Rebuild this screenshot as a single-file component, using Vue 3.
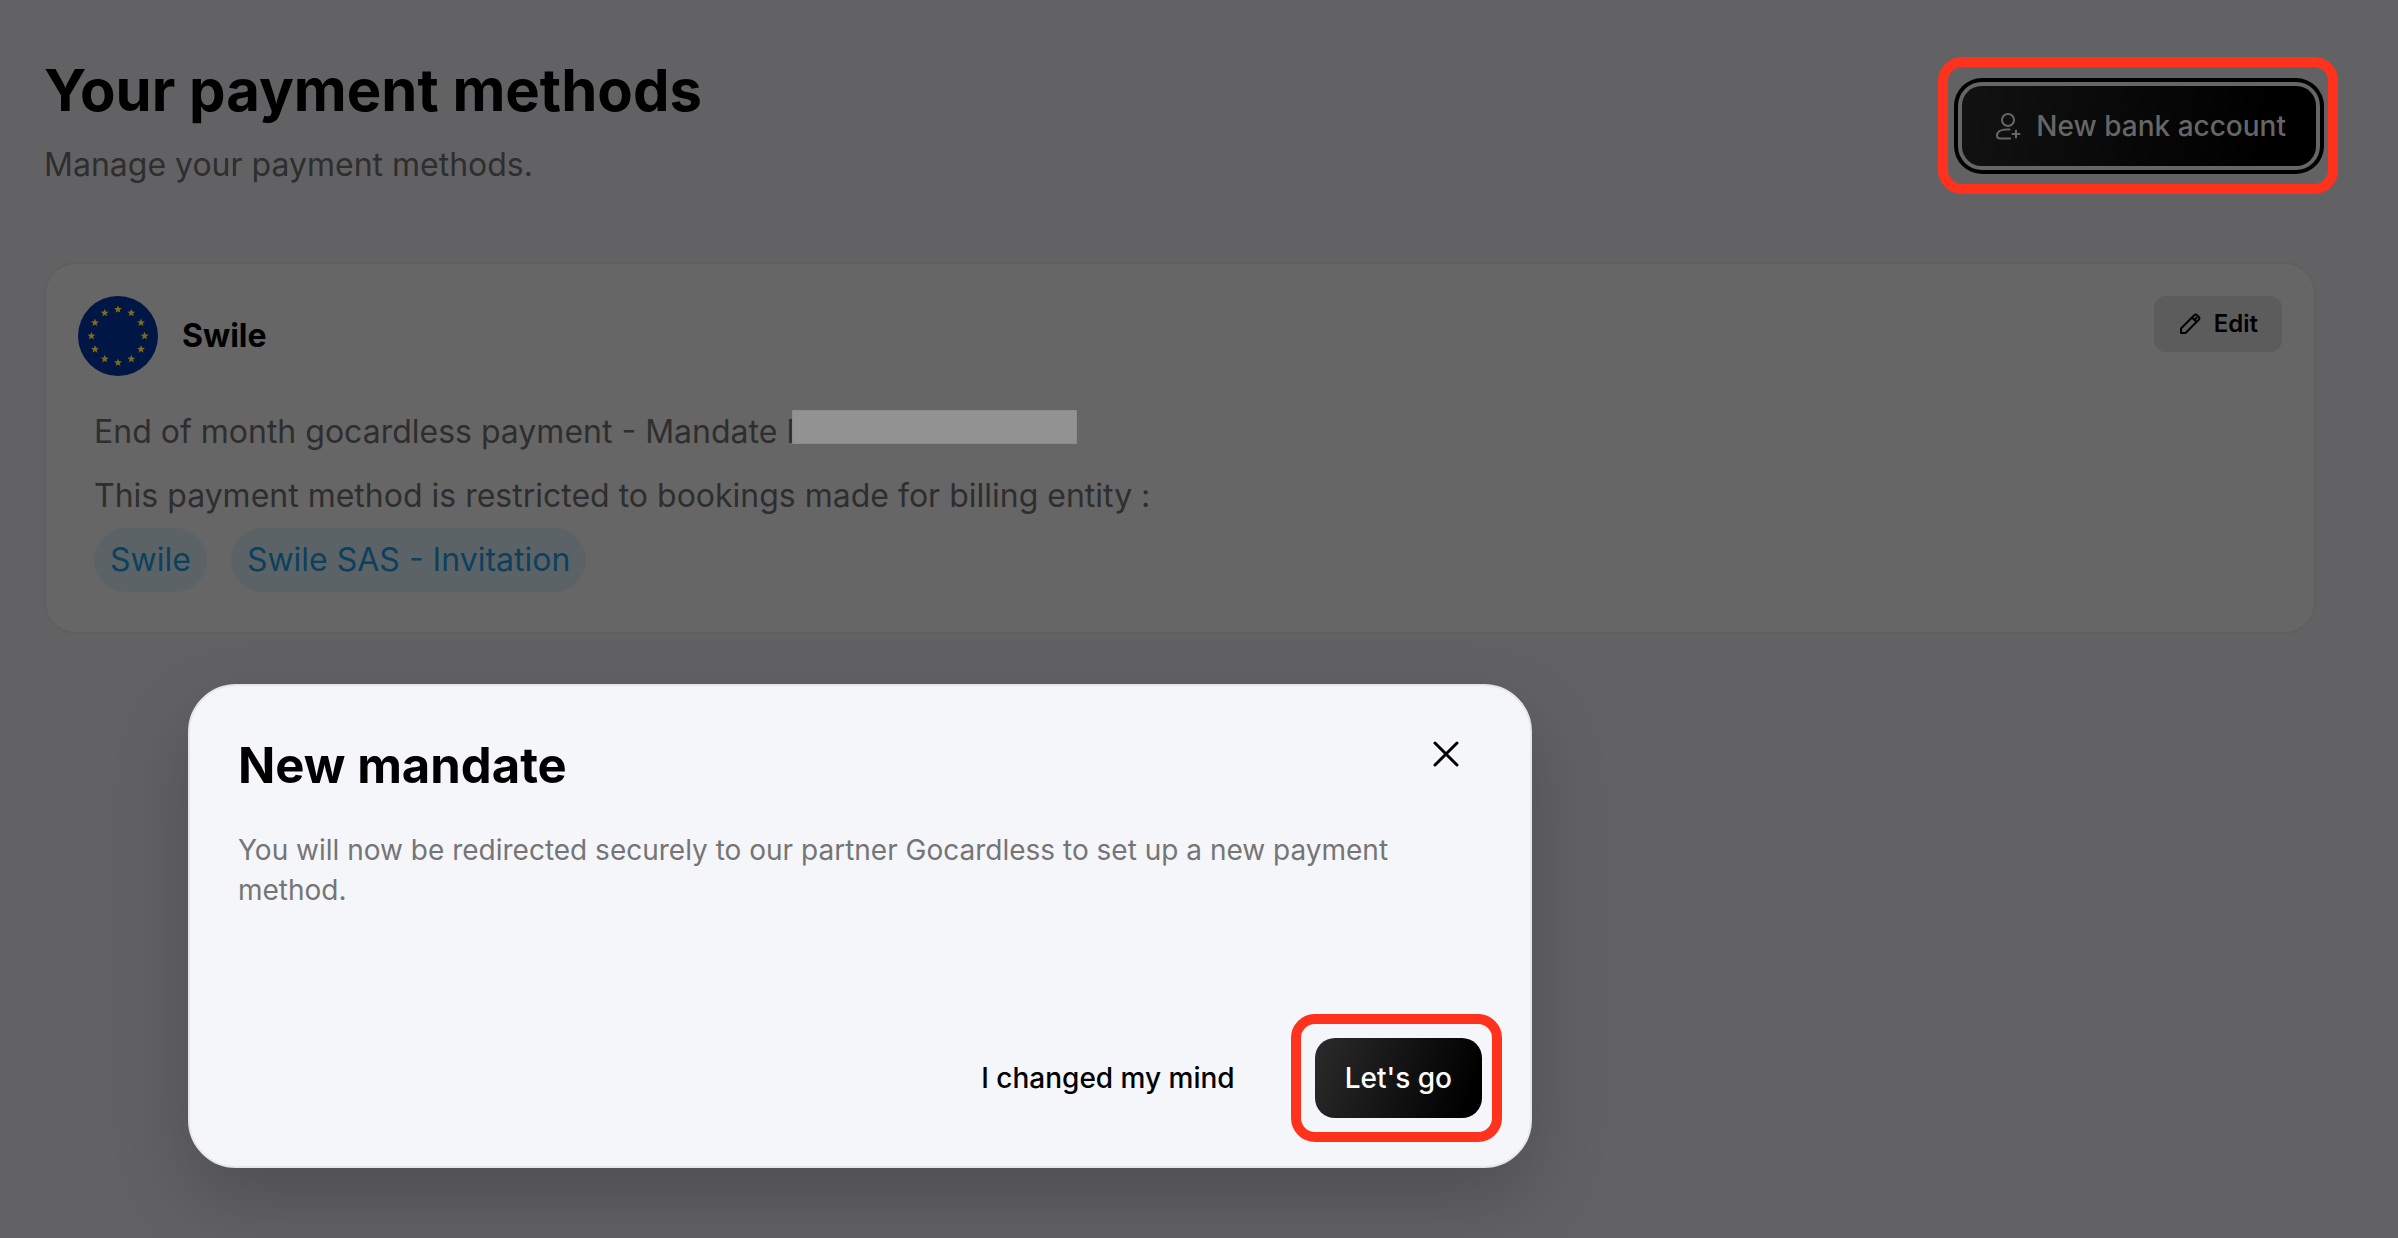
<template>
  <div class="page">
    <header class="page-header">
      <div>
        <h1 class="page-title">Your payment methods</h1>
        <p class="page-subtitle">Manage your payment methods.</p>
      </div>
      <div class="marked marked--header">
        <button type="button" class="btn btn--account" @click="dialogOpen = true">
          <svg class="btn-icon" viewBox="0 0 28 28" aria-hidden="true">
            <circle cx="14" cy="8" r="6" />
            <path d="M15.500 17.500h-3C6.500 17.500 3 20 3 23.500c0 2 1.200 3 3.200 3h10" />
            <path d="M22 18.500v7M18.500 22h7" />
          </svg>
          <span>New bank account</span>
        </button>
      </div>
    </header>

    <section v-for="method in methods" :key="method.name" class="card">
      <div class="card-head">
        <svg class="flag" viewBox="0 0 80 80" role="img" aria-label="European Union">
          <circle cx="40" cy="40" r="40" fill="#001645" />
          <polygon v-for="(points, i) in stars" :key="i" :points="points" fill="#816a1a" />
        </svg>
        <h2 class="card-title">{{ method.name }}</h2>
        <button type="button" class="btn-edit">
          <svg class="edit-icon" viewBox="0 0 24 24" aria-hidden="true">
            <path d="M3 16.500 16.500 3a1.600 1.600 0 0 1 2.200 0l2.300 2.300a1.600 1.600 0 0 1 0 2.200L7.500 21H3z" />
            <path d="M14 5.500l4.500 4.500M17 7.300l2-2" />
          </svg>
          <span>Edit</span>
        </button>
      </div>
      <div class="card-body">
        <p class="mandate">
          {{ method.label }} <span class="mandate-id">M<span class="mask"></span></span>
        </p>
        <p>This payment method is restricted to bookings made for billing entity :</p>
        <ul class="chips">
          <li v-for="entity in method.entities" :key="entity" class="chip">{{ entity }}</li>
        </ul>
      </div>
    </section>

    <div
      v-if="dialogOpen"
      class="dialog"
      role="dialog"
      aria-modal="true"
      aria-labelledby="dialog-title"
    >
      <div class="dialog-head">
        <h2 id="dialog-title" class="dialog-title">New mandate</h2>
        <button type="button" class="dialog-close" aria-label="Close" @click="dialogOpen = false">
          <svg viewBox="0 0 28 28" aria-hidden="true">
            <path d="M3 3l22 22M25 3L3 25" />
          </svg>
        </button>
      </div>
      <p class="dialog-text">
        You will now be redirected securely to our partner Gocardless to set up a new payment method.
      </p>
      <div class="dialog-actions">
        <button type="button" class="btn btn--text" @click="dialogOpen = false">I changed my mind</button>
        <div class="marked marked--dialog">
          <button type="button" class="btn btn--primary">Let's go</button>
        </div>
      </div>
    </div>
  </div>
</template>

<script setup>
import { ref } from 'vue';

const dialogOpen = ref(true);

const methods = [
  {
    name: 'Swile',
    label: 'End of month gocardless payment - Mandate',
    entities: ['Swile', 'Swile SAS - Invitation'],
  },
];

// Twelve five-pointed stars on a circle, all pointing up
const stars = Array.from({ length: 12 }, (_, i) => {
  const a = (i * Math.PI) / 6;
  const cx = 40 + 26.6 * Math.sin(a);
  const cy = 40 - 26.6 * Math.cos(a);
  return Array.from({ length: 10 }, (_, k) => {
    const r = k % 2 ? 1.8 : 4.2;
    const b = (k * Math.PI) / 5;
    return `${(cx + r * Math.sin(b)).toFixed(2)},${(cy - r * Math.cos(b)).toFixed(2)}`;
  }).join(' ');
});
</script>

<style>
body { margin: 0; background: #626264; }
</style>

<style scoped>
*, *::before, *::after { box-sizing: border-box; margin: 0; padding: 0; }
.page {
  position: relative; min-height: 100vh; padding: 52px 82px 52px 44px;
  background: #626264; color: #000; font-family: Inter, "Liberation Sans", sans-serif;
}
button { border: none; background: none; font-family: inherit; color: inherit; cursor: pointer; }
svg { display: block; flex-shrink: 0; }

.page-header { display: flex; align-items: flex-start; justify-content: space-between; margin-bottom: 73px; }
.page-title { font-size: 58px; line-height: 76px; font-weight: 700; }
.page-subtitle { margin-top: 13px; font-size: 32px; line-height: 48px; color: #2e2e2e; }

/* Red frame drawn around the action to follow */
.marked { position: relative; }
.marked::after { content: ""; position: absolute; border: 10px solid #ff321d; border-radius: 24px; pointer-events: none; }
.marked--header { margin-top: 34px; }
.marked--header::after { inset: -29px -22px -28px -24px; }
.marked--dialog::after { inset: -24px -20px -24px -24px; }

.btn {
  display: flex; align-items: center; justify-content: center; height: 80px; padding: 0 30px;
  border-radius: 20px; font-size: 28px; line-height: 40px; font-weight: 500; white-space: nowrap;
}
.btn--account {
  gap: 14px; padding-left: 32px; color: #666; background: linear-gradient(100deg, #121212, #000 85%);
  box-shadow: 0 0 0 4px #666, 0 0 0 8px #000;
}
.btn--primary { color: #fff; background: linear-gradient(110deg, #2b2b2b, #000 90%); }
.btn-icon { width: 28px; height: 28px; fill: none; stroke: #666; stroke-width: 2; stroke-linecap: round; }

.card { padding: 32px; border: 2px solid #5f5f5f; border-radius: 32px; background: #666; }
.card-head { display: flex; align-items: flex-start; }
.flag { width: 80px; height: 80px; }
.card-title { margin-left: 24px; font-size: 32px; line-height: 80px; font-weight: 700; }
.btn-edit {
  display: flex; align-items: center; gap: 12px; height: 56px; margin-left: auto; padding: 0 24px;
  border-radius: 12px; background: #5c5c5c; font-size: 24px; line-height: 32px; font-weight: 600;
}
.edit-icon { width: 24px; height: 24px; fill: none; stroke: #000; stroke-width: 2; stroke-linejoin: round; }

.card-body { margin-top: 24px; padding: 0 16px 8px; font-size: 32px; line-height: 64px; color: #2e2e2e; }
.mandate-id { position: relative; }
.mask { position: absolute; left: 6px; top: -2px; width: 285px; height: 34px; border: 1px solid #8b8b8b; background: #929292; }
.chips { display: flex; gap: 24px; list-style: none; }
.chip { padding: 0 16px; border-radius: 32px; background: #5c6366; color: #0d405f; }

.dialog {
  position: absolute; left: 188px; top: 684px; width: 1344px; max-width: calc(100% - 188px);
  padding: 48px; border: 2px solid #e6e7e9; border-radius: 48px; background: #f5f6fa;
  box-shadow: 0 32px 80px rgba(0, 0, 0, 0.2);
}
.dialog-head { display: flex; align-items: flex-start; justify-content: space-between; }
.dialog-title { font-size: 49px; line-height: 64px; font-weight: 700; }
.dialog-close { padding: 6px 22px; }
.dialog-close svg { width: 28px; height: 28px; fill: none; stroke: #000; stroke-width: 3; stroke-linecap: round; }
.dialog-text { margin-top: 32px; font-size: 28px; line-height: 40px; color: #757575; }
.dialog-actions { display: flex; justify-content: flex-end; gap: 50px; margin-top: 128px; }
</style>
